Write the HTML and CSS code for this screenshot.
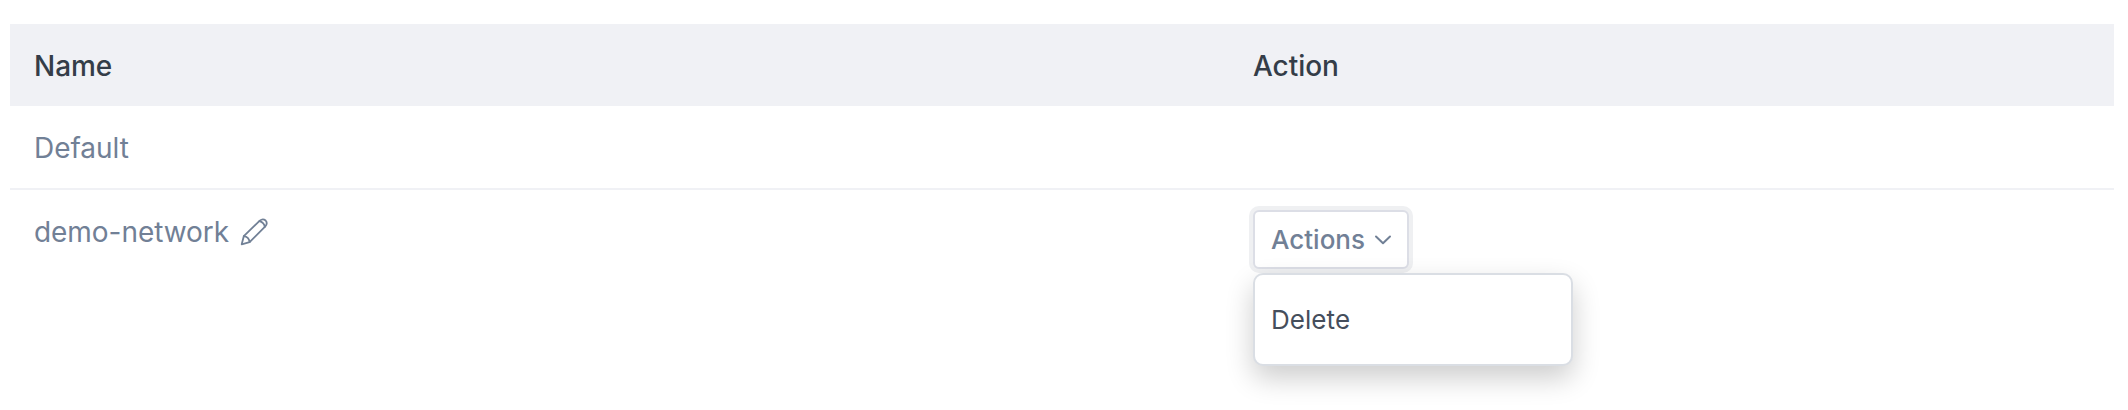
FILE: index.html
```html
<!DOCTYPE html>
<html lang="en">
<head>
<meta charset="utf-8">
<title>Networks</title>
<link rel="stylesheet" href="styles.css">
</head>
<body>
<div class="table">
  <div class="row head">
    <div class="cell">Name</div>
    <div class="cell action">Action</div>
  </div>
  <div class="row line">
    <div class="cell">Default</div>
    <div class="cell action"></div>
  </div>
  <div class="row">
    <div class="cell name">demo-network
      <svg class="pencil" viewBox="0 0 28 28" fill="none" stroke="currentColor" stroke-width="1.8" stroke-linejoin="round" stroke-linecap="round">
        <path d="M1.7 26.3 3.8 18.2 19.8 2.6Q22.9.1 25.6 2.5 28 5.2 25.3 8.3L9.6 24.1Z"/>
        <path d="M3.8 18.2Q8.8 18.9 9.6 24.1"/>
        <path d="M19.4 3.2Q23.9 4.2 24.8 8.8"/>
      </svg>
    </div>
    <div class="cell action controls">
      <div class="dropdown">
        <button class="button" type="button">Actions
          <svg class="chevron" viewBox="0 0 18 10" fill="none" stroke="currentColor" stroke-width="2" stroke-linecap="round" stroke-linejoin="round"><path d="M2 1.5 9 8.2 16 1.5"/></svg>
        </button>
        <div class="menu"><div class="item">Delete</div></div>
      </div>
    </div>
  </div>
</div>
</body>
</html>
```
FILE: styles.css
```css
* { box-sizing: border-box; }
body {
  margin: 0;
  padding: 24px 14px 0 10px;
  height: 410px;
  overflow: hidden;
  background: #fff;
  color: #718096;
  font: 400 28px/42px Inter, "Liberation Sans", sans-serif;
  letter-spacing: -.05px;
}
.row {
  display: grid;
  grid-template-columns: 1220px 1fr;
}
.cell { padding: 21px 24px 19px; min-height: 82px; }
.head { background: #f0f1f5; color: #343d48; font-weight: 480; }
.line { border-bottom: 2px solid #f0f1f5; }
.name { display: flex; align-items: center; align-self: start; }
.pencil { width: 28px; height: 28px; margin-left: 11px; }
.action { padding-left: 23px; }
.controls { padding-top: 20px; }
.dropdown { position: relative; width: 156px; }
.button {
  display: flex;
  align-items: center;
  width: 156px;
  height: 59px;
  padding: 0 0 0 16px;
  border: 2px solid #dcdee6;
  border-radius: 6px;
  background: #fff;
  box-shadow: 0 0 0 4px #eff0f2;
  color: #718096;
  font: 480 26px/40px Inter, "Liberation Sans", sans-serif;
}
.chevron { width: 18px; height: 10px; margin-left: 9px; }
.menu {
  position: absolute;
  top: 63px;
  left: 0;
  width: 320px;
  height: 93px;
  padding: 25px 16px;
  border: 2px solid #dadee4;
  border-radius: 10px;
  background: #fff;
  box-shadow: 0 12px 28px rgba(0, 0, 0, .2);
  color: #454e5c;
  font-size: 26px;
  line-height: 40px;
  letter-spacing: .05px;
}
```
